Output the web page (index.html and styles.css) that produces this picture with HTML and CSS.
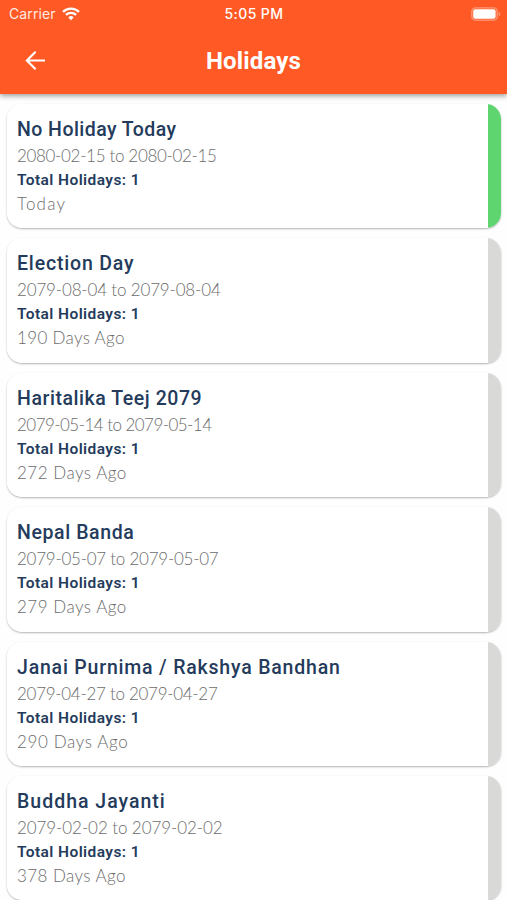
FILE: index.html
```html
<!DOCTYPE html>
<html lang="en">
<head>
<meta charset="utf-8">
<title>Holidays</title>
<link rel="stylesheet" href="styles.css">
</head>
<body>
<header class="header">
  <div class="status">
    <div class="carrier">
      <span>Carrier</span>
      <svg class="wifi" viewBox="0 0 18 14"><path d="M9 13.2 6.3 10.4a3.9 3.9 0 0 1 5.4 0z" fill="#fff"/><path d="M3.9 7.9a7.3 7.3 0 0 1 10.2 0M1 4.9a11.4 11.4 0 0 1 16 0" fill="none" stroke="#fff" stroke-width="2.3"/></svg>
    </div>
    <span class="time">5:05 PM</span>
    <div class="power">
      <svg class="battery" viewBox="0 0 30 14"><rect x=".8" y=".8" width="25.4" height="12.4" rx="3.6" fill="none" stroke="#ff9b7b" stroke-width="1.3"/><rect x="2.2" y="2.3" width="22.4" height="9.4" rx="2" fill="#fff"/><path d="M27.7 4.8c2.2.8 2.2 3.6 0 4.4z" fill="#ff9b7b"/></svg>
    </div>
  </div>
  <div class="bar">
    <svg class="back" viewBox="0 0 22 20"><path d="M20 9.5H2M10.6.8 1.9 9.5l8.7 8.7" fill="none" stroke="#fff" stroke-width="2.2"/></svg>
    <h1 class="heading">Holidays</h1>
  </div>
</header>
<main class="list">
  <article class="card card-today">
    <h2 class="name t1">No Holiday Today</h2>
    <p class="dates d1">2080-02-15 to 2080-02-15</p>
    <p class="total">Total Holidays: 1</p>
    <p class="ago a1">Today</p>
  </article>
  <article class="card">
    <h2 class="name t2">Election Day</h2>
    <p class="dates d2">2079-08-04 to 2079-08-04</p>
    <p class="total">Total Holidays: 1</p>
    <p class="ago a2">190 Days Ago</p>
  </article>
  <article class="card">
    <h2 class="name t3">Haritalika Teej 2079</h2>
    <p class="dates d3">2079-05-14 to 2079-05-14</p>
    <p class="total">Total Holidays: 1</p>
    <p class="ago a3">272 Days Ago</p>
  </article>
  <article class="card">
    <h2 class="name t4">Nepal Banda</h2>
    <p class="dates d4">2079-05-07 to 2079-05-07</p>
    <p class="total">Total Holidays: 1</p>
    <p class="ago a4">279 Days Ago</p>
  </article>
  <article class="card">
    <h2 class="name t5">Janai Purnima / Rakshya Bandhan</h2>
    <p class="dates d5">2079-04-27 to 2079-04-27</p>
    <p class="total">Total Holidays: 1</p>
    <p class="ago a5">290 Days Ago</p>
  </article>
  <article class="card">
    <h2 class="name t6">Buddha Jayanti</h2>
    <p class="dates d6">2079-02-02 to 2079-02-02</p>
    <p class="total">Total Holidays: 1</p>
    <p class="ago a6">378 Days Ago</p>
  </article>
</main>
</body>
</html>
```
FILE: styles.css
```css
* { box-sizing: border-box; }
html, body { height: 900px; overflow: hidden; }
body {
  margin: 0;
  background: #fefefe;
  font-family: Roboto, "Liberation Sans", sans-serif;
  display: flex;
  flex-direction: column;
}
h1, h2, p { margin: 0; white-space: nowrap; }
svg { display: block; }

.header {
  flex: none;
  height: 94px;
  background: #ff5a25;
  color: #fff;
  position: relative;
  box-shadow: 0 2px 5px rgba(0, 0, 0, .38);
}
.status {
  height: 27px;
  padding: 0 6px 0 9px;
  display: grid;
  grid-template-columns: 1fr auto 1fr;
  align-items: center;
  font: 400 14px/27px Inter, sans-serif;
}
.carrier { display: flex; align-items: center; gap: 6px; color: #ffe9e0; letter-spacing: .1px; }
.wifi { width: 18px; height: 14px; }
.time { font-weight: 500; letter-spacing: .4px; margin-left: -2px; }
.power { display: flex; justify-content: flex-end; }
.battery { width: 30px; height: 14px; }

.bar {
  height: 67px;
  padding: 0 25px;
  display: grid;
  grid-template-columns: 22px 1fr 22px;
  align-items: center;
}
.back { width: 22px; height: 20px; }
.heading { font-size: 24px; line-height: 30px; font-weight: 700; text-align: center; letter-spacing: .15px; }

.list {
  padding: 10px 6px 0 7px;
  display: flex;
  flex-direction: column;
  gap: 10px;
}
.card {
  flex: none;
  height: 124.4px;
  padding: 12px 10px 0;
  border-radius: 15px;
  background: linear-gradient(to left, #d9d9d8 12.5px, #fff 12.5px);
  box-shadow: 0 1px 2px rgba(0, 0, 0, .3);
}
.card-today { background: linear-gradient(to left, #5fd570 12.5px, #fff 12.5px); }
.name { font-size: 19.5px; line-height: 28px; font-weight: 500; color: #243b5c; }
.dates, .ago { font: 300 17px/24px Lato, sans-serif; color: #6c6c6c; }
.total { font-size: 15.5px; line-height: 24px; font-weight: 600; color: #243b5c; letter-spacing: .42px; }

.t1 { letter-spacing: .45px; }
.t2 { letter-spacing: .83px; }
.t3 { letter-spacing: .55px; }
.t4 { letter-spacing: .6px; }
.t5 { letter-spacing: .8px; }
.t6 { letter-spacing: 1px; }

.d1 { letter-spacing: -.33px; }
.d2 { letter-spacing: -.16px; }
.d3 { letter-spacing: -.54px; }
.d4 { letter-spacing: -.25px; }
.d5 { letter-spacing: -.29px; }
.d6 { letter-spacing: -.08px; }

.a1 { letter-spacing: 1.2px; }
.a2 { letter-spacing: .33px; }
.a3, .a4 { letter-spacing: .5px; }
.a5 { letter-spacing: .62px; }
.a6 { letter-spacing: .42px; }
```
